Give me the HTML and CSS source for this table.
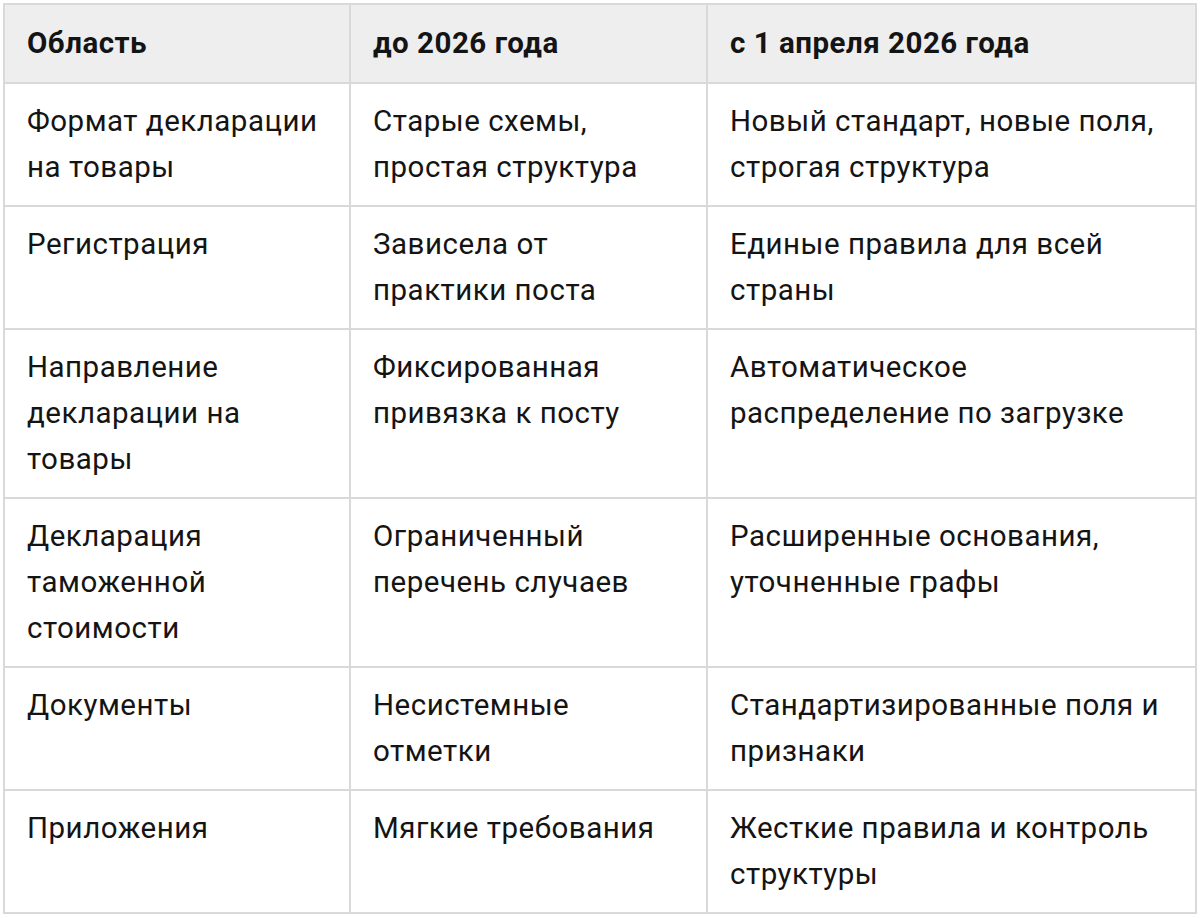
FILE: index.html
```html
<!DOCTYPE html>
<html lang="ru">
<head>
<meta charset="utf-8">
<link rel="stylesheet" href="styles.css">
</head>
<body>
<table class="cmp">
  <colgroup>
    <col class="c1"><col class="c2"><col class="c3">
  </colgroup>
  <thead>
    <tr><th>Область</th><th>до 2026 года</th><th>с 1 апреля 2026 года</th></tr>
  </thead>
  <tbody>
    <tr><td>Формат декларации на товары</td><td>Старые схемы, простая структура</td><td>Новый стандарт, новые поля, строгая структура</td></tr>
    <tr><td>Регистрация</td><td>Зависела от практики поста</td><td>Единые правила для всей страны</td></tr>
    <tr><td>Направление декларации на товары</td><td>Фиксированная привязка к посту</td><td>Автоматическое распределение по загрузке</td></tr>
    <tr><td>Декларация таможенной стоимости</td><td>Ограниченный перечень случаев</td><td>Расширенные основания, уточненные графы</td></tr>
    <tr><td>Документы</td><td>Несистемные отметки</td><td>Стандартизированные поля и признаки</td></tr>
    <tr><td>Приложения</td><td>Мягкие требования</td><td>Жесткие правила и контроль структуры</td></tr>
  </tbody>
</table>
</body>
</html>
```
FILE: styles.css
```css
html, body { margin: 0; padding: 0; background: #fff; }
body { padding: 3px; }
.cmp {
  border-collapse: collapse;
  width: 1194px;
  table-layout: fixed;
  font-family: Roboto, "Noto Sans", sans-serif;
  font-size: 29.5px;
  line-height: 46px;
  letter-spacing: 0.5px;
  color: #141414;
}
.c1 { width: 346px; }
.c2 { width: 357px; }
.c3 { width: auto; }
.cmp th, .cmp td {
  border: 2px solid #d9d9d9;
  padding: 14px 22px 15px;
  text-align: left;
  vertical-align: top;
}
.cmp th {
  background: #eeeeee;
  font-weight: 700;
  padding-top: 15px;
  padding-bottom: 16px;
}
```
